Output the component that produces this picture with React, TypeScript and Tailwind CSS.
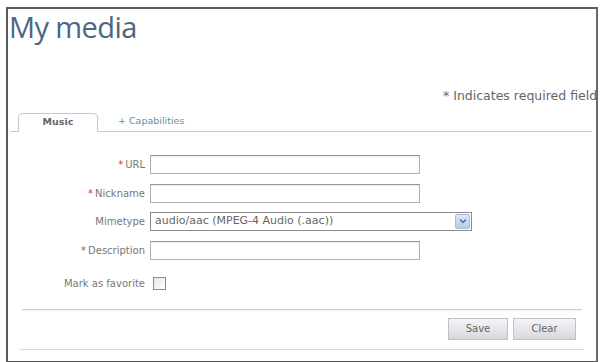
import React from "react";

const labelCls = "text-[10px] text-[#777] text-right pr-[5px] whitespace-nowrap";
const inputCls = "h-[19px] border border-[#b0b0b0] border-t-[#959595] bg-white shadow-[inset_0_1px_1px_rgba(0,0,0,0.08)]";

const Req = () => <span className="text-[#d04040] mr-[2px]">*</span>;

const App = () => {
  return (
    <div className="w-[601px] h-[362px] bg-white overflow-hidden" style={{ fontFamily: "Verdana, 'DejaVu Sans', sans-serif" }}>
      <div className="ml-[6px] mt-[7px] w-[592px] h-[356px] border-2 border-[#5a5a5a] border-r-[#6a6a6a] overflow-hidden">
        {/* Title */}
        <h1
          className="pl-[1px] text-[29px] leading-[36px] text-[#4d6783] tracking-[-0.6px]"
          style={{ fontFamily: "'Open Sans', sans-serif" }}
        >
          My media
        </h1>

        <div className="mt-[42px] pl-[435px] whitespace-nowrap text-[12.5px] text-[#666]">
          * Indicates required fields
        </div>

        {/* Tabs */}
        <div className="mt-[7px] ml-[2px] mr-[4px] flex items-end h-[19px] border-b border-[#c8c8c8]">
          <div className="ml-[8px] w-[80px] h-[19px] -mb-px border border-[#c8c8c8] border-b-white rounded-t-[5px] bg-white flex items-center justify-center text-[9.5px] font-bold text-[#666]">
            Music
          </div>
          <div className="ml-[20px] h-[19px] flex items-center text-[9.5px] text-[#5f8fa0]">
            + Capabilities
          </div>
        </div>

        {/* Form */}
        <div className="mt-[23px] grid grid-cols-[142px_auto] items-center gap-y-[10px]">
          <label className={labelCls}>
            <Req />URL
          </label>
          <div className={`${inputCls} w-[270px]`} />

          <label className={labelCls}>
            <Req />Nickname
          </label>
          <div className={`${inputCls} w-[270px]`} />

          <label className={`${labelCls} -mt-[1px]`}>Mimetype</label>
          <div className="-mt-[1px] h-[19px] w-[322px] border border-[#8a8a8a] bg-white flex items-center">
            <span className="flex-1 pl-[4px] text-[11px] text-[#666] whitespace-nowrap">audio/aac (MPEG-4 Audio (.aac))</span>
            <span className="w-[15px] h-[15px] mr-[1px] rounded-[2px] bg-gradient-to-b from-[#dfe8f7] to-[#b7c8e8] border border-[#a9bbdc] flex items-center justify-center">
              <svg width="8" height="6" viewBox="0 0 8 6">
                <path d="M1 1.5 L4 4.5 L7 1.5" fill="none" stroke="#4d6aa0" strokeWidth="1.5" />
              </svg>
            </span>
          </div>

          <label className={labelCls}>
            <Req />Description
          </label>
          <div className={`${inputCls} w-[270px]`} />

          <label className={`${labelCls} mt-[6px]`}>Mark as favorite</label>
          <div className="mt-[6px] ml-[3px] w-[13px] h-[13px] border border-[#8a8a8a] bg-gradient-to-br from-[#e8e8e8] to-white" />
        </div>

        {/* Buttons */}
        <div className="mt-[18px] mx-[14px] border-t border-[#cfcfcf] shadow-[0_1px_1px_rgba(0,0,0,0.06)]" />
        <div className="mt-[8px] pr-[20px] flex justify-end gap-[5px]">
          <button className="w-[60px] h-[22px] border border-[#c0c0c0] bg-gradient-to-b from-[#f4f4f6] to-[#d8d9e0] text-[10px] text-[#666]">
            Save
          </button>
          <button className="w-[63px] h-[22px] border border-[#c0c0c0] bg-gradient-to-b from-[#f4f4f6] to-[#d8d9e0] text-[10px] text-[#666]">
            Clear
          </button>
        </div>
        <div className="mt-[9px] mx-[12px] border-t border-[#d8d8d8]" />
      </div>
    </div>
  );
};

export default App;
